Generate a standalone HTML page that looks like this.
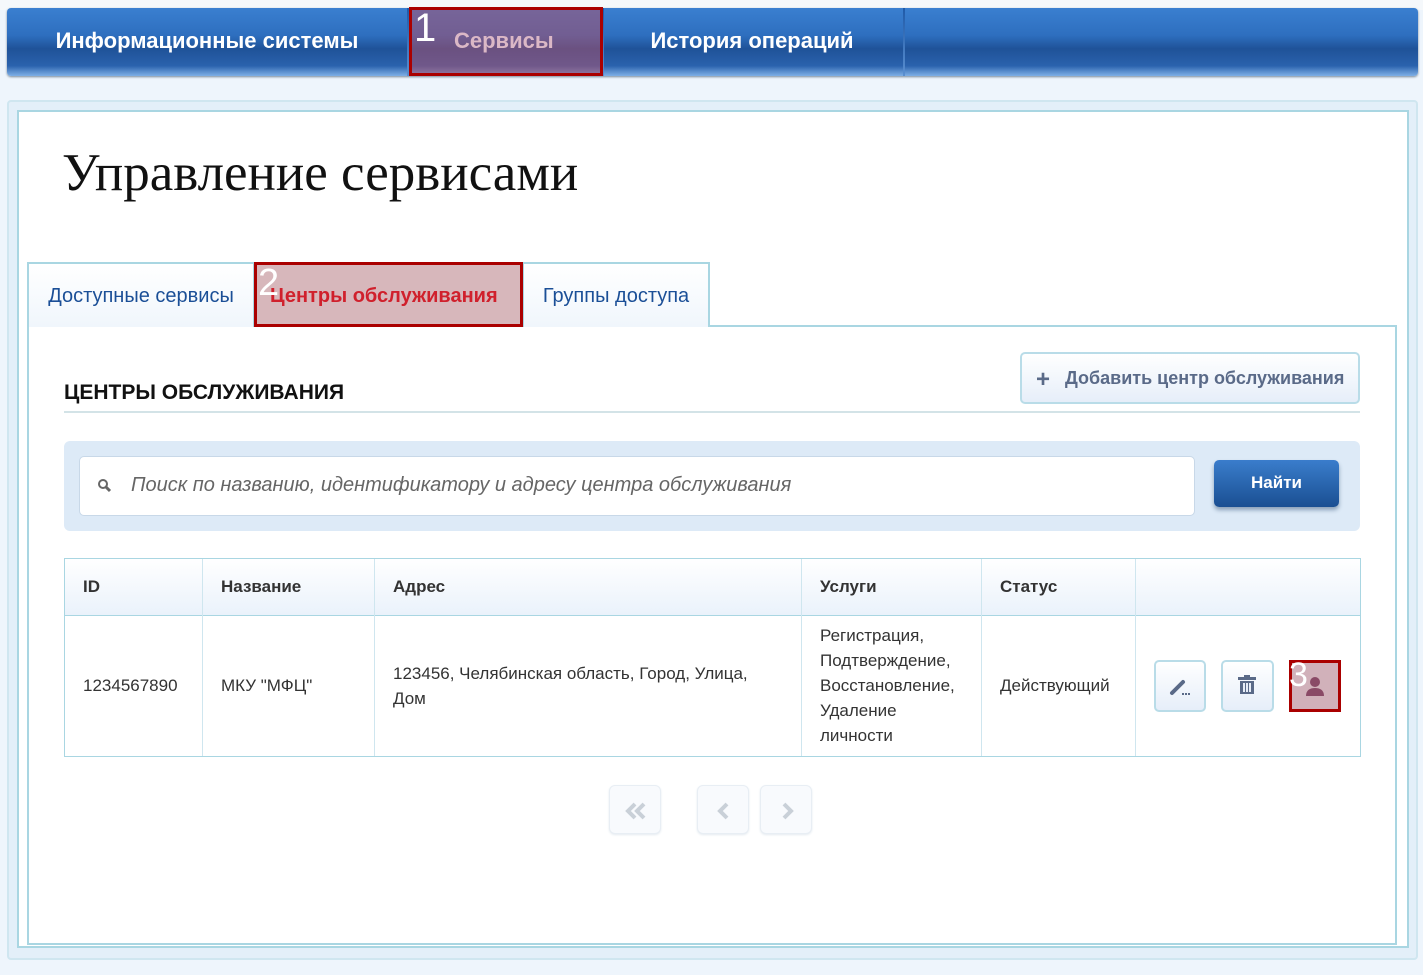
<!DOCTYPE html>
<html><head><meta charset="utf-8"><style>
*{box-sizing:border-box;margin:0;padding:0}
body{width:1423px;height:975px;background:#eef5fc;font-family:"Liberation Sans",sans-serif;position:relative;overflow:hidden}
.a{position:absolute}
.nav{left:7px;top:8px;width:1411px;height:68px;border-radius:4px;background:linear-gradient(#3a7fd0 0%,#2e6fbf 40%,#1f5298 60%,#2a62ad 85%,#7fb0e6 100%);box-shadow:0 1px 2px #789}
.nav .it{position:absolute;top:0;height:68px;line-height:66px;color:#fff;font-weight:bold;font-size:22px;text-align:center}
.sep{position:absolute;top:0;width:2px;height:68px;background:linear-gradient(#1f5aa8,#5a8fd0)}
.hl{border:3px solid #a00;background:rgba(170,80,110,.55)}
.cell{position:absolute;font-size:17px;color:#333}
.btn{position:absolute;border:2px solid #b9dce8;border-radius:5px;background:linear-gradient(#fff,#e6eef9)}
.pg{position:absolute;top:785px;width:52px;height:49px;border:1px solid #e8eef4;border-radius:6px;background:#f8fafd;box-shadow:0 1px 2px #e4eaf0}
.pg svg{position:absolute;left:14px;top:13px}
</style></head><body>
<div class="a" style="left:0;top:0;width:1423px;height:10px;background:#f5f8fb"></div>
<div class="a nav">
 <div class="it" style="left:0;width:400px">Информационные системы</div>
 <div class="sep" style="left:400px"></div>
 <div class="it" style="left:595px;width:300px">История операций</div>
 <div class="sep" style="left:595px"></div>
 <div class="sep" style="left:896px"></div>
</div>
<div class="a hl" style="left:409px;top:7px;width:194px;height:69px"></div>
<div class="a" style="left:414px;top:6px;color:#fff;font-size:40px">1</div>
<div class="a" style="left:454px;top:28px;color:#dbb8c6;font-weight:bold;font-size:22px">Сервисы</div>

<div class="a" style="left:7px;top:100px;width:1411px;height:860px;border:2px solid #cfe6f0;border-radius:4px;background:#e3eff9"></div>
<div class="a" style="left:17px;top:110px;width:1392px;height:838px;border:2px solid #a9d6e2;background:#fff"></div>
<div class="a" style="left:62px;top:143px;font-family:'Liberation Serif',serif;font-size:53px;color:#111">Управление сервисами</div>

<div class="a" style="left:27px;top:325px;width:1370px;height:620px;border:2px solid #a9d6e2"></div>
<div class="a" style="left:27px;top:262px;width:228px;height:65px;border:2px solid #a9d6e2;border-bottom:none;background:linear-gradient(#fff,#f0f6fc);color:#1b4f97;font-size:20px;line-height:64px;text-align:center">Доступные сервисы</div>
<div class="a" style="left:522px;top:262px;width:188px;height:65px;border:2px solid #a9d6e2;border-bottom:none;background:linear-gradient(#fff,#f0f6fc);color:#1b4f97;font-size:20px;line-height:64px;text-align:center">Группы доступа</div>
<div class="a hl" style="left:254px;top:262px;width:269px;height:65px;background:#d7b7bb"></div>
<div class="a" style="left:270px;top:285px;color:#d0202c;font-weight:bold;font-size:20px">Центры обслуживания</div>
<div class="a" style="left:258px;top:262px;color:#fff;font-size:38px">2</div>

<div class="a" style="left:64px;top:381px;font-size:21px;font-weight:bold;color:#111">ЦЕНТРЫ ОБСЛУЖИВАНИЯ</div>
<div class="a" style="left:64px;top:411px;width:1296px;height:2px;background:#d3e3e7"></div>
<div class="btn" style="left:1020px;top:352px;width:340px;height:52px"></div>
<div class="a" style="left:1036px;top:366px;font-size:24px;font-weight:bold;color:#5a6a88">+</div>
<div class="a" style="left:1065px;top:368px;font-size:18px;font-weight:bold;color:#5a6a88">Добавить центр обслуживания</div>

<div class="a" style="left:64px;top:441px;width:1296px;height:90px;border-radius:6px;background:#ddeaf7"></div>
<div class="a" style="left:79px;top:456px;width:1116px;height:60px;border:1px solid #c8d8e8;border-radius:5px;background:#fff"></div>
<svg class="a" style="left:97px;top:478px" width="16" height="16"><circle cx="6" cy="6" r="4" fill="none" stroke="#666" stroke-width="2"/><path d="M9 9l4 4" stroke="#666" stroke-width="3"/></svg>
<div class="a" style="left:131px;top:474px;font-size:20px;font-style:italic;color:#666">Поиск по названию, идентификатору и адресу центра обслуживания</div>
<div class="a" style="left:1214px;top:460px;width:125px;height:47px;border-radius:5px;background:linear-gradient(#3a7dcc,#1a4f92);box-shadow:0 3px 4px #8aa0b8;color:#fff;font-weight:bold;font-size:17px;text-align:center;line-height:46px">Найти</div>

<div class="a" style="left:64px;top:558px;width:1297px;height:199px;border:1px solid #a9d6e2"></div>
<div class="a" style="left:65px;top:559px;width:1295px;height:57px;background:linear-gradient(#fff,#eaf2fb);border-bottom:1px solid #a9d6e2"></div>
<div class="a" style="left:202px;top:559px;width:1px;height:197px;background:#cfe6ef"></div>
<div class="a" style="left:374px;top:559px;width:1px;height:197px;background:#cfe6ef"></div>
<div class="a" style="left:801px;top:559px;width:1px;height:197px;background:#cfe6ef"></div>
<div class="a" style="left:981px;top:559px;width:1px;height:197px;background:#cfe6ef"></div>
<div class="a" style="left:1135px;top:559px;width:1px;height:197px;background:#cfe6ef"></div>
<div class="cell" style="left:83px;top:577px;font-weight:bold">ID</div>
<div class="cell" style="left:221px;top:577px;font-weight:bold">Название</div>
<div class="cell" style="left:393px;top:577px;font-weight:bold">Адрес</div>
<div class="cell" style="left:820px;top:577px;font-weight:bold">Услуги</div>
<div class="cell" style="left:1000px;top:577px;font-weight:bold">Статус</div>
<div class="cell" style="left:83px;top:676px">1234567890</div>
<div class="cell" style="left:221px;top:676px">МКУ "МФЦ"</div>
<div class="cell" style="left:393px;top:661px;line-height:25px">123456, Челябинская область, Город, Улица,<br>Дом</div>
<div class="cell" style="left:820px;top:623px;line-height:25px">Регистрация,<br>Подтверждение,<br>Восстановление,<br>Удаление<br>личности</div>
<div class="cell" style="left:1000px;top:676px">Действующий</div>
<div class="btn" style="left:1154px;top:660px;width:52px;height:52px"></div>
<svg class="a" style="left:1168px;top:674px" width="24" height="24"><path d="M4 19L15 8" stroke="#5a6a88" stroke-width="4" stroke-linecap="round"/><rect x="14" y="19" width="2" height="2" fill="#5a6a88"/><rect x="17" y="19" width="2" height="2" fill="#5a6a88"/><rect x="20" y="19" width="2" height="2" fill="#5a6a88"/></svg>
<div class="btn" style="left:1221px;top:660px;width:53px;height:52px"></div>
<svg class="a" style="left:1236px;top:674px" width="24" height="24"><rect x="2" y="3" width="18" height="3" fill="#5a6a88"/><rect x="8" y="1" width="6" height="3" fill="#5a6a88"/><rect x="4" y="7" width="14" height="13" fill="#5a6a88"/><rect x="7" y="9" width="2" height="9" fill="#e8eef8"/><rect x="10" y="9" width="2" height="9" fill="#e8eef8"/><rect x="13" y="9" width="2" height="9" fill="#e8eef8"/></svg>
<div class="a hl" style="left:1289px;top:660px;width:52px;height:52px;background:#d1b1ba"></div>
<svg class="a" style="left:1303px;top:674px" width="24" height="24"><circle cx="12" cy="8" r="5" fill="#8a4a66"/><path d="M3 22c0-6 4-8 9-8s9 2 9 8z" fill="#8a4a66"/></svg>
<div class="a" style="left:1289px;top:656px;color:#fff;font-size:34px">3</div>

<div class="pg" style="left:609px"><svg width="24" height="24"><path d="M11 5l-7 7 7 7M20 5l-7 7 7 7" fill="none" stroke="#c9d0d8" stroke-width="4"/></svg></div>
<div class="pg" style="left:697px"><svg width="24" height="24"><path d="M15 5l-7 7 7 7" fill="none" stroke="#c9d0d8" stroke-width="4"/></svg></div>
<div class="pg" style="left:760px"><svg width="24" height="24"><path d="M9 5l7 7-7 7" fill="none" stroke="#c9d0d8" stroke-width="4"/></svg></div>
</body></html>
